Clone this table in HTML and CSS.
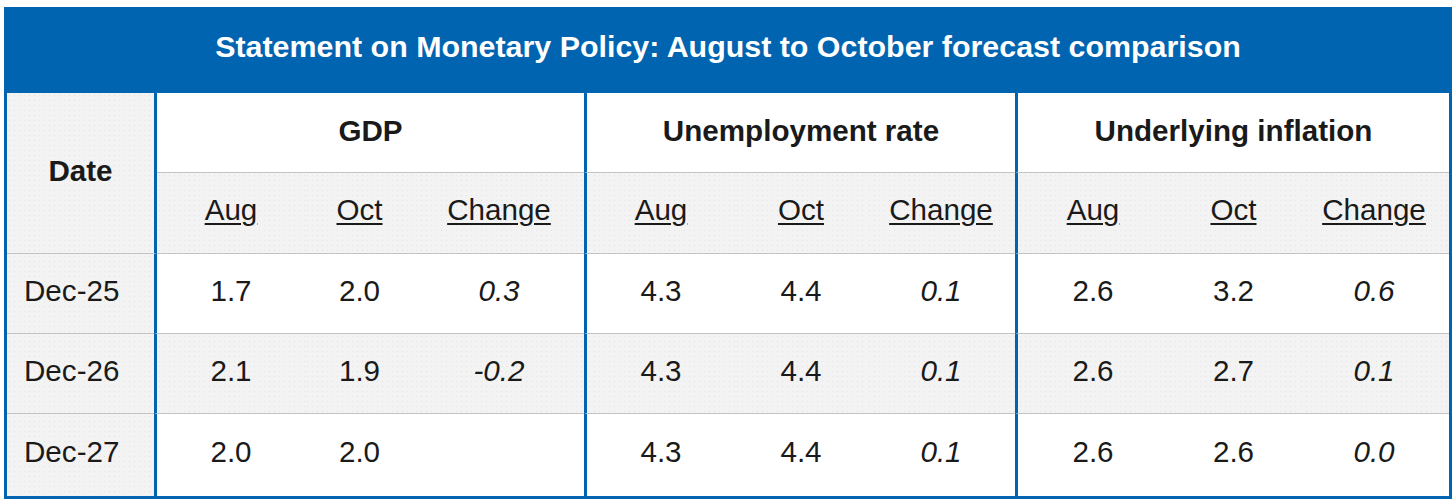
FILE: index.html
```html
<!DOCTYPE html>
<html lang="en">
<head>
<meta charset="utf-8">
<title>Statement on Monetary Policy: August to October forecast comparison</title>
<link rel="stylesheet" href="styles.css">
</head>
<body>
<div class="frame">
  <div class="title">Statement on Monetary Policy: August to October forecast comparison</div>
  <div class="grid">
    <div class="cell date-head shade">Date</div>
    <div class="cell group g1">GDP</div>
    <div class="cell group g2">Unemployment rate</div>
    <div class="cell group g3">Underlying inflation</div>

    <div class="cell sub shade gs"><u>Aug</u></div>
    <div class="cell sub shade"><u>Oct</u></div>
    <div class="cell sub shade"><u>Change</u></div>
    <div class="cell sub shade gs"><u>Aug</u></div>
    <div class="cell sub shade"><u>Oct</u></div>
    <div class="cell sub shade"><u>Change</u></div>
    <div class="cell sub shade gs"><u>Aug</u></div>
    <div class="cell sub shade"><u>Oct</u></div>
    <div class="cell sub shade"><u>Change</u></div>

    <div class="cell row-label shade">Dec-25</div>
    <div class="cell num gs">1.7</div>
    <div class="cell num">2.0</div>
    <div class="cell num chg">0.3</div>
    <div class="cell num gs">4.3</div>
    <div class="cell num">4.4</div>
    <div class="cell num chg">0.1</div>
    <div class="cell num gs">2.6</div>
    <div class="cell num">3.2</div>
    <div class="cell num chg">0.6</div>

    <div class="cell row-label shade">Dec-26</div>
    <div class="cell num shade gs">2.1</div>
    <div class="cell num shade">1.9</div>
    <div class="cell num shade chg">-0.2</div>
    <div class="cell num shade gs">4.3</div>
    <div class="cell num shade">4.4</div>
    <div class="cell num shade chg">0.1</div>
    <div class="cell num shade gs">2.6</div>
    <div class="cell num shade">2.7</div>
    <div class="cell num shade chg">0.1</div>

    <div class="cell row-label shade last">Dec-27</div>
    <div class="cell num gs last">2.0</div>
    <div class="cell num last">2.0</div>
    <div class="cell num chg last"></div>
    <div class="cell num gs last">4.3</div>
    <div class="cell num last">4.4</div>
    <div class="cell num chg last">0.1</div>
    <div class="cell num gs last">2.6</div>
    <div class="cell num last">2.6</div>
    <div class="cell num chg last">0.0</div>
  </div>
</div>
</body>
</html>
```

FILE: styles.css
```css
* {
  box-sizing: border-box;
}

html, body {
  margin: 0;
  padding: 0;
  background: #ffffff;
}

body {
  padding: 7px 0 0 4px;
  font-family: "Liberation Sans", Arial, sans-serif;
  color: #1a1a1a;
}

.frame {
  width: 1448px;
  border: 3px solid #0064b0;
}

.title {
  height: 83px;
  background: #0064b0;
  color: #ffffff;
  font-weight: bold;
  font-size: 30.4px;
  display: flex;
  align-items: center;
  justify-content: center;
  padding-bottom: 11px;
}

.grid {
  display: grid;
  grid-template-columns: 147px 151px 109px 170px 151px 132px 148px 153px 131px 150px;
  grid-template-rows: 80px 81px 80px 80px 82px;
  font-size: 29.6px;
}

.cell {
  display: flex;
  align-items: center;
  justify-content: center;
  border-bottom: 1px solid #c3c3c3;
  background-color: #ffffff;
}

.cell.last {
  border-bottom: none;
}

.shade {
  background-color: #f3f3f3;
  background-image: radial-gradient(circle, #e3e3e3 0.7px, transparent 0.9px);
  background-size: 5px 5px;
}

.date-head {
  grid-row: 1 / span 2;
  grid-column: 1;
  font-weight: bold;
  border-right: 3px solid #0064b0;
  width: 150px;
  margin-right: -3px;
  position: relative;
  z-index: 1;
  padding-bottom: 5px;
}

.group {
  font-weight: bold;
  border-left: 3px solid #0064b0;
  padding-bottom: 4px;
}

.g1 { grid-column: 2 / span 3; }
.g2 { grid-column: 5 / span 3; }
.g3 { grid-column: 8 / span 3; }

.gs {
  border-left: 3px solid #0064b0;
}

.sub {
  padding-bottom: 7px;
}

.sub u {
  text-decoration-thickness: 2px;
  text-underline-offset: 3px;
}

.row-label {
  justify-content: flex-start;
  padding-left: 17px;
  padding-bottom: 6px;
}

.num {
  padding-bottom: 6px;
}

.chg {
  font-style: italic;
}
```
